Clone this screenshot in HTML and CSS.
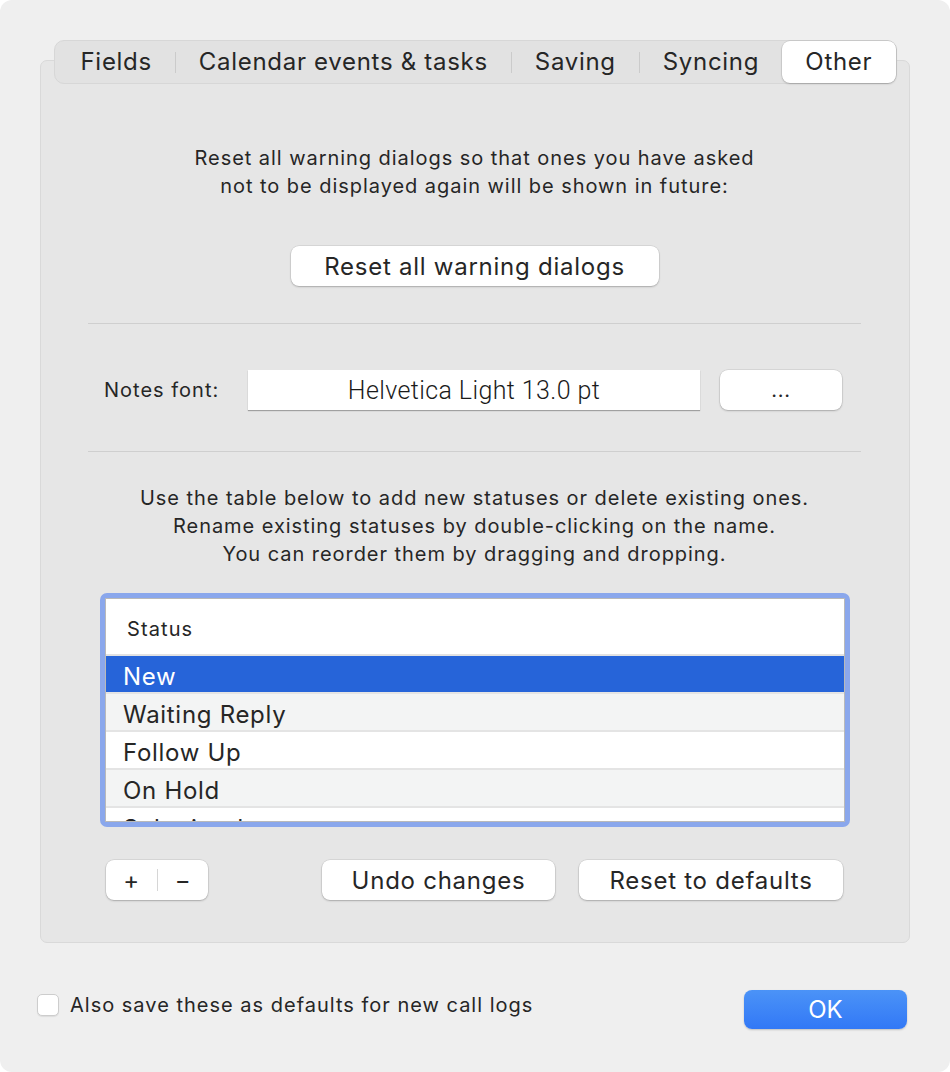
FILE: index.html
```html
<!DOCTYPE html>
<html lang="en">
<head>
    <meta charset="UTF-8">
    <meta name="viewport" content="width=device-width, initial-scale=1.0">
    <title>Preferences</title>
    <link rel="stylesheet" href="styles.css">
</head>
<body>
    <div class="window">
        <div class="tabview">
            <div class="tabs">
                <div class="tab">Fields</div>
                <div class="tab-sep"></div>
                <div class="tab">Calendar events &amp; tasks</div>
                <div class="tab-sep"></div>
                <div class="tab">Saving</div>
                <div class="tab-sep"></div>
                <div class="tab">Syncing</div>
                <div class="tab active">Other</div>
            </div>
            <div class="panel">
                <p class="info info-warn">Reset all warning dialogs so that ones you have asked<br>not to be displayed again will be shown in future:</p>
                <div class="center">
                    <button class="btn btn-reset-warn">Reset all warning dialogs</button>
                </div>
                <hr class="divider divider-1">
                <div class="font-row">
                    <span class="font-label">Notes font:</span>
                    <div class="font-field">Helvetica Light 13.0 pt</div>
                    <button class="btn btn-dots">...</button>
                </div>
                <hr class="divider divider-2">
                <p class="info info-table">Use the table below to add new statuses or delete existing ones.<br>Rename existing statuses by double-clicking on the name.<br>You can reorder them by dragging and dropping.</p>
                <div class="table-ring">
                    <div class="table">
                        <div class="table-head">Status</div>
                        <div class="row selected">New</div>
                        <div class="row alt">Waiting Reply</div>
                        <div class="row">Follow Up</div>
                        <div class="row alt">On Hold</div>
                        <div class="row">Submitted</div>
                    </div>
                </div>
                <div class="table-buttons">
                    <div class="segmented">
                        <span class="seg">+</span>
                        <span class="seg-sep"></span>
                        <span class="seg">&minus;</span>
                    </div>
                    <button class="btn btn-undo">Undo changes</button>
                    <button class="btn btn-defaults">Reset to defaults</button>
                </div>
            </div>
        </div>
        <div class="footer">
            <label class="check">
                <span class="checkbox"></span>
                Also save these as defaults for new call logs
            </label>
            <button class="btn-ok">OK</button>
        </div>
    </div>
</body>
</html>
```

FILE: styles.css
```css
body {
    margin: 0;
    background: #ffffff;
    font-family: Inter, "Liberation Sans", sans-serif;
    color: #262626;
}
.window {
    width: 950px;
    height: 1072px;
    box-sizing: border-box;
    background: #efefef;
    border-radius: 12px;
    padding-top: 40px;
}
.tabview {
    margin: 0 40px;
}
.tabs {
    position: relative;
    z-index: 1;
    display: flex;
    align-items: center;
    width: 843px;
    height: 44px;
    box-sizing: border-box;
    margin: 0 auto;
    background: #e2e2e2;
    border: 1px solid #d7d7d7;
    border-radius: 10px;
    padding-left: 3px;
}
.tab {
    font-size: 24px;
    letter-spacing: 0.7px;
    padding: 0 23px;
    height: 42px;
    line-height: 42px;
    white-space: nowrap;
}
.tab.active {
    margin-left: auto;
    width: 116px;
    box-sizing: border-box;
    text-align: center;
    padding: 0;
    background: #fff;
    border-radius: 8px;
    box-shadow: 0 0 0 0.5px rgba(0, 0, 0, 0.12), 0 1px 2px rgba(0, 0, 0, 0.2);
}
.tab-sep {
    width: 1px;
    height: 21px;
    background: #cbcbcb;
}
.panel {
    margin-top: -24px;
    height: 883px;
    box-sizing: border-box;
    background: #e6e6e6;
    border: 1px solid #d9d9d9;
    border-radius: 7px;
    padding: 83px 48px 0 47px;
}
.info {
    margin: 0;
    text-align: center;
    font-size: 20px;
    letter-spacing: 0.95px;
    line-height: 28px;
}
.center {
    display: flex;
    justify-content: center;
}
.btn {
    font-family: inherit;
    font-size: 24px;
    letter-spacing: 0.75px;
    color: #262626;
    height: 40px;
    padding: 0;
    background: #fff;
    border: none;
    border-radius: 8px;
    box-shadow: 0 0 0 0.5px rgba(0, 0, 0, 0.12), 0 1px 2px rgba(0, 0, 0, 0.22);
}
.btn-reset-warn {
    margin-top: 46px;
    width: 368px;
}
.divider {
    border: none;
    height: 1px;
    background: #cfcfcf;
    margin: 0;
}
.divider-1 {
    margin-top: 37px;
}
.font-row {
    display: flex;
    align-items: center;
    margin: 46px 18px 0 16px;
}
.font-label {
    font-size: 20px;
    letter-spacing: 1px;
    width: 144px;
}
.font-field {
    width: 452px;
    height: 40px;
    line-height: 42px;
    text-align: center;
    background: #fff;
    box-shadow: 0 1px 1px rgba(0, 0, 0, 0.3);
    font-family: Roboto, "Liberation Sans", Arial, sans-serif;
    font-weight: 300;
    font-size: 25px;
    letter-spacing: 0.4px;
    color: #1a1a1a;
}
.btn-dots {
    margin-left: 20px;
    width: 122px;
    font-size: 20px;
}
.divider-2 {
    margin-top: 41px;
}
.info-table {
    margin-top: 32px;
}
.table-ring {
    margin: 25px 11px 0 12px;
    border: 5px solid #8aa7ec;
    border-radius: 7px;
}
.table {
    border: 1px solid #b9b9b9;
    height: 222px;
    overflow: hidden;
    background: #fff;
}
.table-head {
    height: 55px;
    line-height: 60px;
    font-size: 20px;
    letter-spacing: 1.1px;
    padding-left: 21px;
    border-bottom: 2px solid #e2e2e2;
}
.row {
    height: 36px;
    line-height: 42px;
    font-size: 24px;
    letter-spacing: 0.7px;
    padding-left: 17px;
    border-bottom: 2px solid #e4e4e4;
}
.row.alt {
    background: #f3f4f4;
}
.row.selected {
    background: #2664d9;
    color: #fff;
}
.table-buttons {
    display: flex;
    align-items: center;
    margin: 33px 18px 0;
}
.segmented {
    display: flex;
    align-items: center;
    width: 102px;
    height: 40px;
    background: #fff;
    border-radius: 8px;
    box-shadow: 0 0 0 0.5px rgba(0, 0, 0, 0.12), 0 1px 2px rgba(0, 0, 0, 0.22);
    font-size: 24px;
}
.seg {
    flex: 1;
    text-align: center;
}
.seg-sep {
    width: 1px;
    height: 22px;
    background: #d6d6d6;
}
.btn-undo {
    margin-left: auto;
    width: 233px;
}
.btn-defaults {
    margin-left: 24px;
    width: 264px;
}
.footer {
    display: flex;
    align-items: flex-start;
    margin-top: 47px;
    padding: 0 43px 0 37px;
}
.check {
    display: flex;
    align-items: center;
    margin-top: 3px;
    font-size: 20px;
    letter-spacing: 1px;
}
.checkbox {
    width: 20px;
    height: 20px;
    margin-right: 11px;
    background: #fff;
    border: 1px solid #cdcdcd;
    border-radius: 5px;
    box-shadow: 0 1px 1px rgba(0, 0, 0, 0.08);
}
.btn-ok {
    margin-left: auto;
    width: 163px;
    height: 39px;
    border: none;
    border-radius: 8px;
    background: linear-gradient(#4b93f7, #3278f6);
    box-shadow: 0 1px 2px rgba(0, 0, 0, 0.2);
    color: #fff;
    font-family: inherit;
    font-size: 24px;
}
```
